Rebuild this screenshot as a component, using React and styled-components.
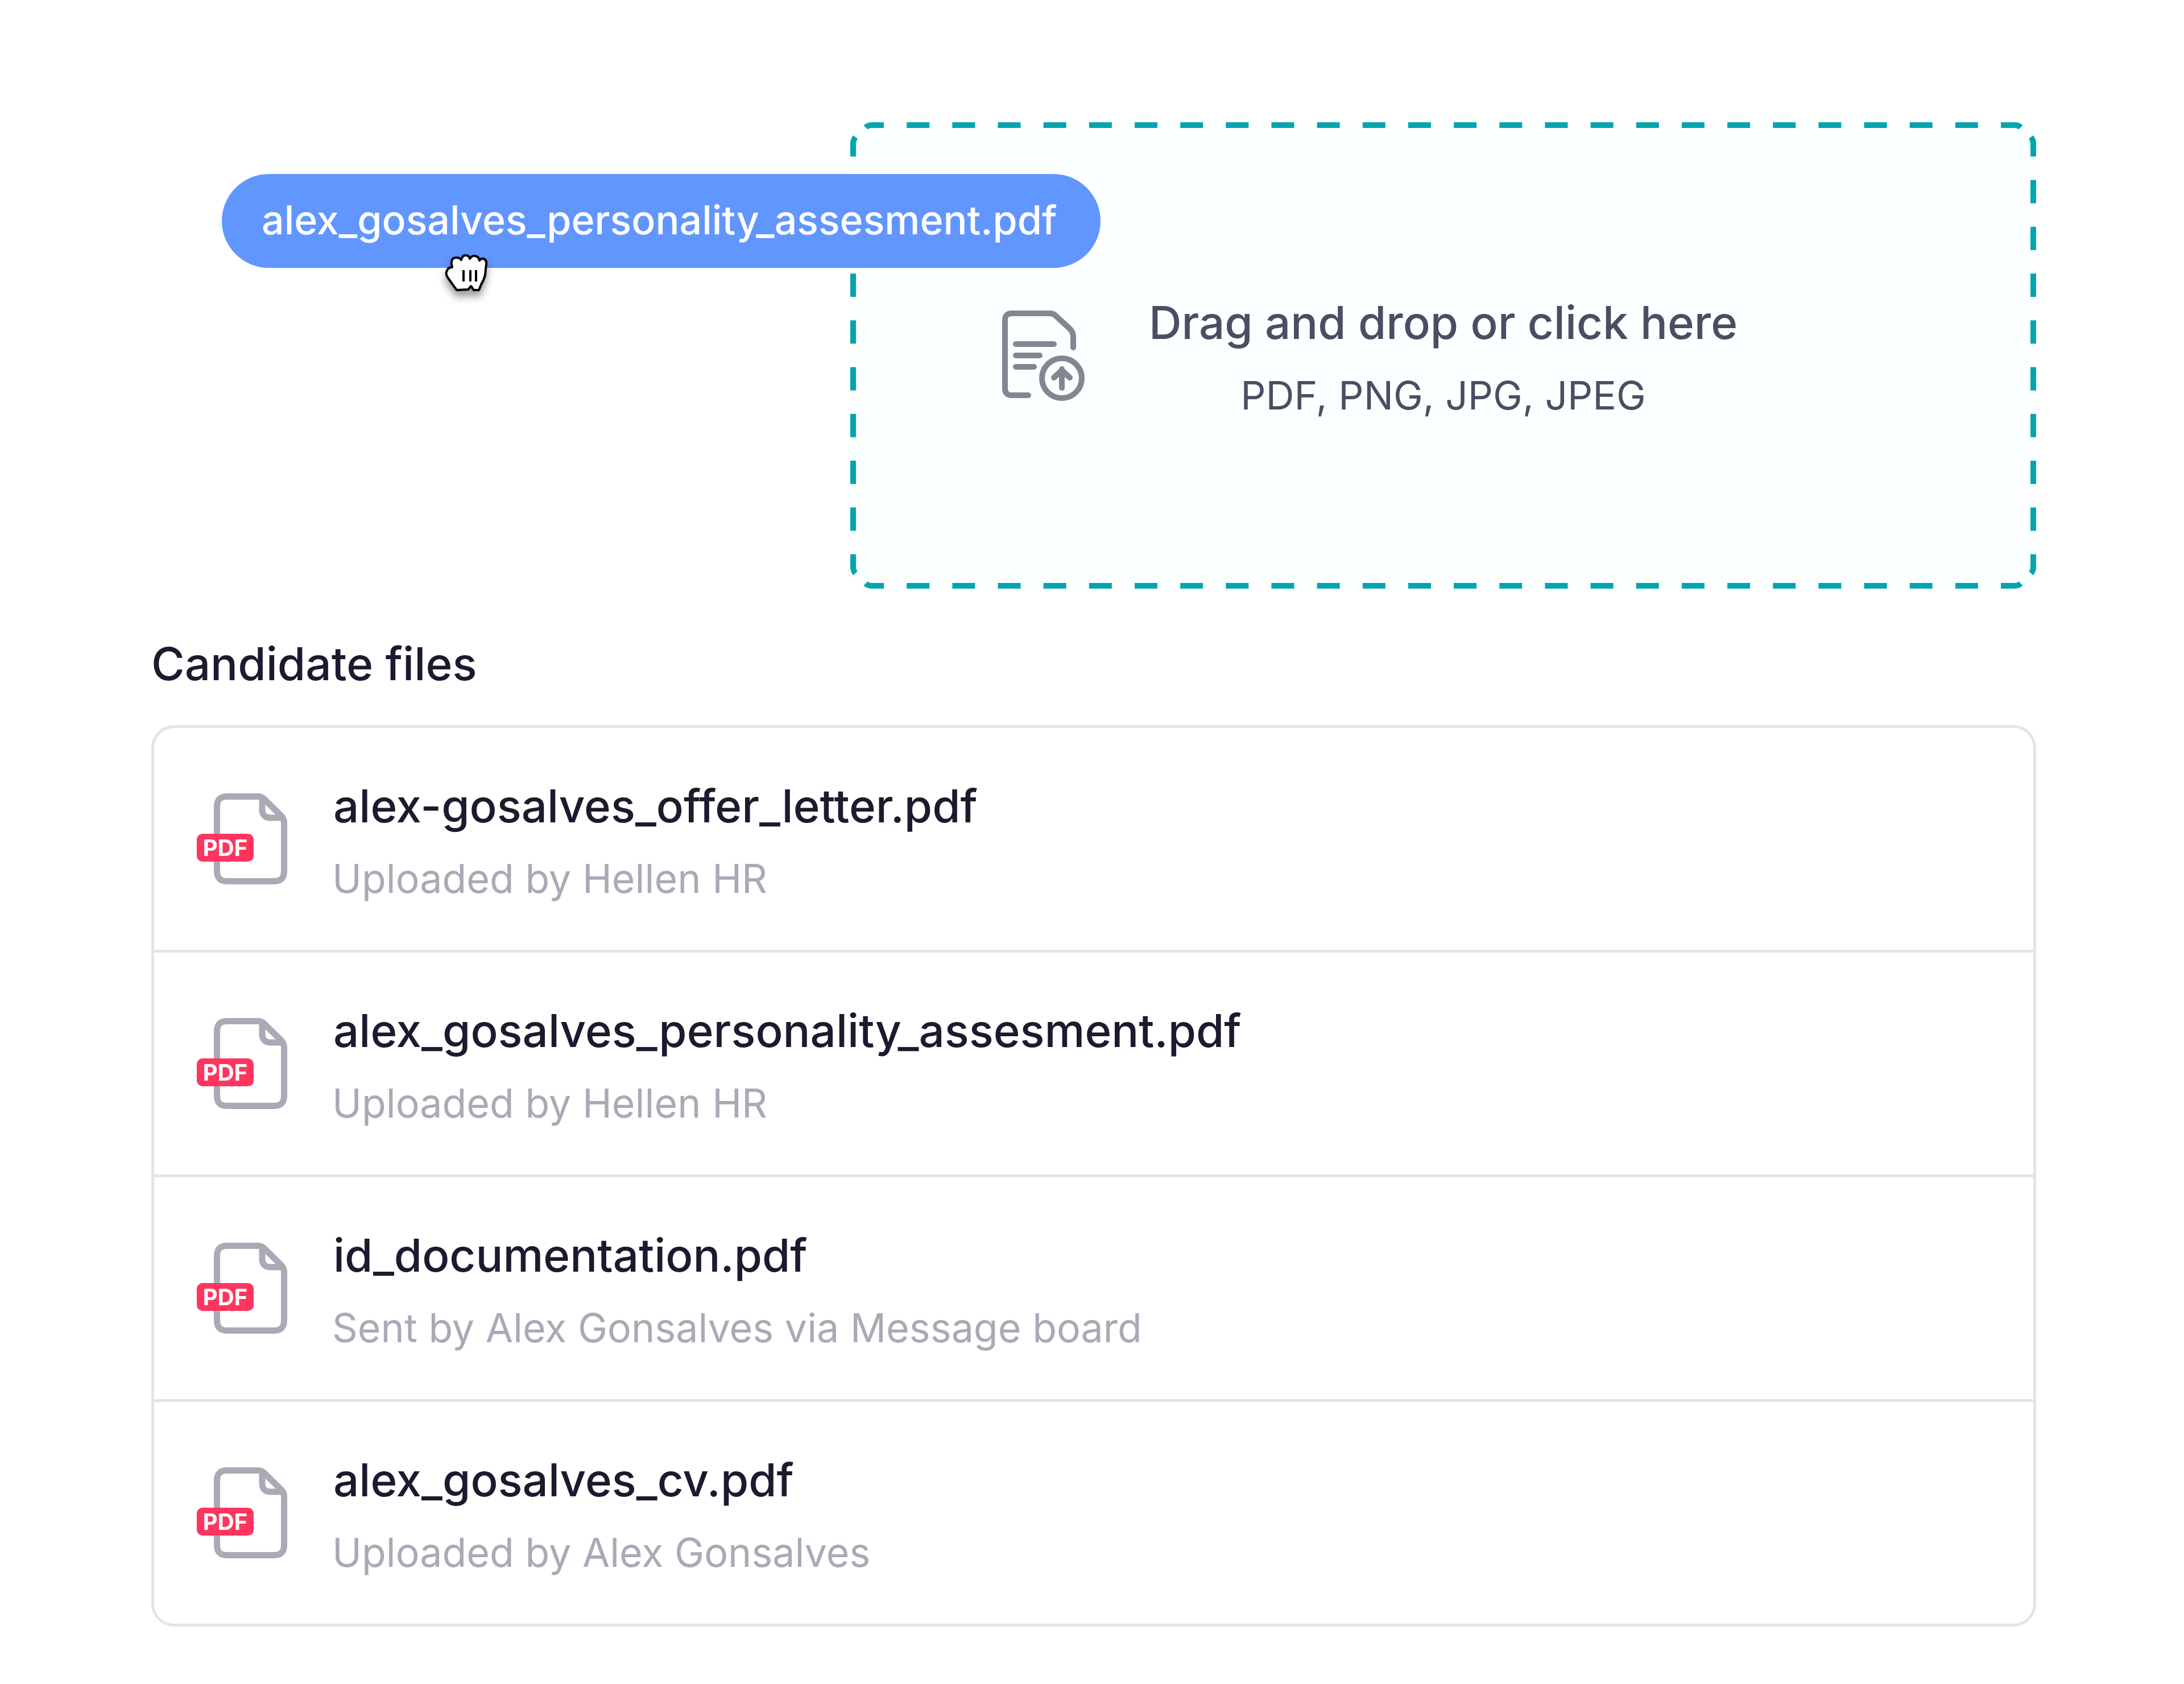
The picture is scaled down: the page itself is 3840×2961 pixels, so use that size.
import React from "react";
import styled, { createGlobalStyle } from "styled-components";

const Global = createGlobalStyle`
  html, body { margin: 0; padding: 0; background: #fff; }
  * { box-sizing: border-box; }
  body { font-family: Inter, "Noto Sans", sans-serif; }
`;
const Page = styled.div`
  position: relative;
  width: 3840px;
  height: 2961px;
  padding: 215px 260px 0 266px;
  background: #fff;
`;
const Top = styled.div`
  display: flex;
  justify-content: flex-end;
`;
const Zone = styled.div`
  position: relative;
  width: 2085px;
  height: 820px;
  padding-top: 313px;
  background: #fbffff;
  border-radius: 30px;
  display: grid;
  grid-template-columns: 1fr auto 1fr;
  column-gap: 113px;
  align-items: start;
`;
const Dash = styled.svg`
  position: absolute;
  inset: 0;
`;
const UploadIcon = styled.svg`
  justify-self: end;
  margin-top: 18px;
`;
const ZoneText = styled.div`
  text-align: center;
  color: #4b4e63;
`;
const ZoneTitle = styled.div`
  font-size: 79.8px;
  line-height: 97px;
  font-weight: 500;
  margin-top: -9px;
`;
const ZoneSub = styled.div`
  font-size: 69.4px;
  line-height: 82px;
  margin-top: 38px;
`;
const Pill = styled.div`
  position: absolute;
  left: 390px;
  top: 306px;
  width: 1545px;
  height: 165px;
  padding: 0 0 5px 70px;
  border-radius: 83px;
  background: #6296ff;
  color: #fff;
  font-size: 69.9px;
  font-weight: 500;
  display: flex;
  align-items: center;
`;
const Hand = styled.svg`
  position: absolute;
  left: 780px;
  top: 440px;
  filter: drop-shadow(0 10px 7px rgba(0, 0, 0, 0.4));
`;
const Heading = styled.h2`
  margin: 83px 0 0;
  font-size: 80px;
  line-height: 97px;
  font-weight: 500;
  color: #1b1b2f;
`;
const Card = styled.div`
  margin-top: 60px;
  border: 5px solid #e3e4e9;
  border-radius: 40px;
`;
const Row = styled.div`
  height: ${(p) => (p.$first ? "390px" : "395px")};
  display: flex;
  align-items: center;
  padding-left: 105px;
  gap: 81px;
  border-top: ${(p) => (p.$first ? "0" : "5px solid #e3e4e9")};
`;
const FileWrap = styled.div`
  position: relative;
  width: 129px;
  height: 160px;
`;
const Badge = styled.div`
  position: absolute;
  left: -30px;
  top: 71px;
  width: 100px;
  height: 49px;
  border-radius: 10px;
  background: #ff3560;
  color: #fff;
  font-size: 40px;
  font-weight: 700;
  display: flex;
  align-items: center;
  justify-content: center;
`;
const FileText = styled.div`
  display: flex;
  flex-direction: column;
  gap: 36px;
  margin-top: 6px;
`;
const Name = styled.div`
  font-size: 79.8px;
  line-height: 97px;
  font-weight: 500;
  color: #1b1b2f;
`;
const Sub = styled.div`
  font-size: 69.9px;
  line-height: 85px;
  margin-left: -2px;
  color: #a9aab6;
`;

const files = [
  ["alex-gosalves_offer_letter.pdf", "Uploaded by Hellen HR"],
  ["alex_gosalves_personality_assesment.pdf", "Uploaded by Hellen HR"],
  ["id_documentation.pdf", "Sent by Alex Gonsalves via Message board"],
  ["alex_gosalves_cv.pdf", "Uploaded by Alex Gonsalves"],
];

const FileIcon = () => (
  <svg width="129" height="160" viewBox="0 0 129 160" fill="none" stroke="#a9aab6" strokeWidth="11" strokeLinejoin="round">
    <path d="M23 5.5H78Q84 5.5 88 9.5L119 40Q123.5 45 123.5 51V137Q123.5 154.5 106 154.5H23Q5.5 154.5 5.5 137V23Q5.5 5.5 23 5.5Z" />
    <path d="M85 6V28Q85 43 100 43H123" />
  </svg>
);

export default function App() {
  return (
    <Page>
      <Global />
      <Top>
        <Zone>
          <Dash width="2085" height="820" fill="none" stroke="#03a5ae" strokeWidth="10">
            <g strokeDasharray="40 40.16" strokeDashoffset="7">
              <path d="M27 9Q31 5 38 5H2047Q2054 5 2058 9" />
              <path d="M27 811Q31 815 38 815H2047Q2054 815 2058 811" />
            </g>
            <g strokeDasharray="41 41.25" strokeDashoffset="6">
              <path d="M9 26Q5 31 5 38V782Q5 789 9 793" />
              <path d="M2076 26Q2080 31 2080 38V782Q2080 789 2076 793" />
            </g>
          </Dash>
          <UploadIcon width="145" height="159" viewBox="0 0 145 159" fill="none" stroke="#828891" strokeWidth="10" strokeLinecap="round" strokeLinejoin="round">
            <path d="M46 149H17Q5 149 5 137V17Q5 5 17 5H84Q90 5 94 9L119 32Q125 38 125 46V65" />
            <path d="M24 59H91M24 79H66M24 99H56" />
            <circle cx="105" cy="119" r="35" />
            <path d="M105 136V103M91 118L105 105L119 118" />
          </UploadIcon>
          <ZoneText>
            <ZoneTitle>Drag and drop or click here</ZoneTitle>
            <ZoneSub>PDF, PNG, JPG, JPEG</ZoneSub>
          </ZoneText>
        </Zone>
      </Top>
      <Heading>Candidate files</Heading>
      <Card>
        {files.map(([name, sub], i) => (
          <Row key={name} $first={i === 0}>
            <FileWrap>
              <FileIcon />
              <Badge>PDF</Badge>
            </FileWrap>
            <FileText>
              <Name>{name}</Name>
              <Sub>{sub}</Sub>
            </FileText>
          </Row>
        ))}
      </Card>
      <Pill>alex_gosalves_personality_assesment.pdf</Pill>
      <Hand width="80" height="80" viewBox="0 0 80 80" fill="#fff" stroke="#000" strokeWidth="4" strokeLinejoin="round">
        <path d="M23 70L10 52Q3 43 5 38Q8 29 15 30L14 24Q13 13 22 13Q29 13 31 17Q33 8 39 9Q45 9 46 15Q50 9 55 10Q62 11 63 18Q66 14 70 15Q76 17 75 24L73 43Q71 52 67 58L62 70H53L48 63L43 69Z" />
        <path d="M35 35V55M47 35V55M57 35V55" fill="none" />
      </Hand>
    </Page>
  );
}
